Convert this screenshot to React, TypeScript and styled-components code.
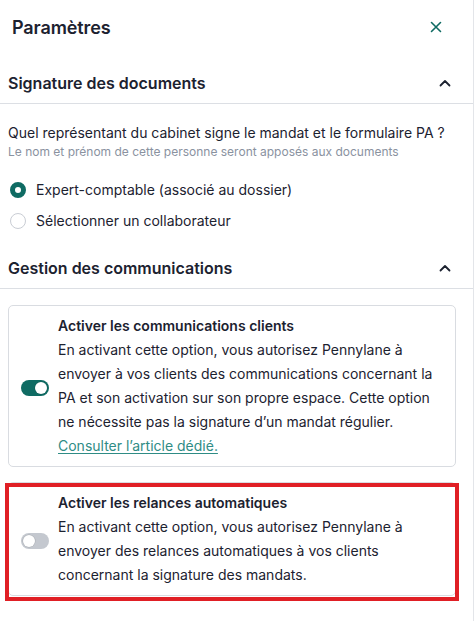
import React, { useState } from "react";
import styled, { createGlobalStyle, css } from "styled-components";

const GlobalStyle = createGlobalStyle`
  * { box-sizing: border-box; }
  html, body { margin: 0; padding: 0; background: #ffffff; }
  body {
    font-family: Inter, "Noto Sans", "Liberation Sans", sans-serif;
    color: #1c2230;
    -webkit-font-smoothing: antialiased;
  }
`;

const TEAL = "#0f6b63";

const Panel = styled.div`
  width: 474px;
  min-height: 621px;
  border-right: 1px solid #e3e5e9;
  display: flex;
  flex-direction: column;
`;

const Header = styled.header`
  height: 54px;
  display: flex;
  align-items: center;
  justify-content: space-between;
  padding: 0 21px 0 12px;
`;

const Title = styled.h1`
  margin: 0;
  font-size: 18px;
  font-weight: 600;
  letter-spacing: -0.1px;
  color: #1c2230;
`;

const IconButton = styled.button`
  width: 32px;
  height: 32px;
  border: none;
  background: transparent;
  padding: 0;
  display: flex;
  align-items: center;
  justify-content: center;
  cursor: pointer;
  color: ${TEAL};
`;

const Section = styled.section<{ $first?: boolean }>`
  display: flex;
  flex-direction: column;
  margin-top: ${(p) => (p.$first ? "8px" : "11px")};
`;

const SectionHeader = styled.div`
  height: 42px;
  display: flex;
  align-items: center;
  justify-content: space-between;
  padding: 0 16px 0 8px;
  border-bottom: 1px solid #dcdfe4;
`;

const SectionTitle = styled.h2`
  margin: 0;
  font-size: 16px;
  font-weight: 600;
  color: #1c2230;
`;

const Chevron = styled.span`
  width: 24px;
  height: 24px;
  display: flex;
  align-items: center;
  justify-content: center;
  color: #1c2230;
`;

const SectionBody = styled.div<{ $cards?: boolean }>`
  display: flex;
  flex-direction: column;
  padding: ${(p) => (p.$cards ? "16px 17px 0 8px" : "18px 8px 0 8px")};
  gap: ${(p) => (p.$cards ? "15px" : "0")};
`;

const Question = styled.p`
  margin: 0;
  font-size: 14px;
  line-height: 22px;
  color: #1c2230;
`;

const Hint = styled.p`
  margin: 0;
  font-size: 12px;
  line-height: 16px;
  color: #8a929f;
`;

const RadioGroup = styled.div`
  display: flex;
  flex-direction: column;
  margin-top: 14px;
`;

const RadioRow = styled.label`
  height: 31px;
  display: flex;
  align-items: center;
  gap: 10px;
  font-size: 14px;
  color: #1c2230;
  cursor: pointer;
`;

const RadioDot = styled.span<{ $checked: boolean }>`
  width: 16px;
  height: 16px;
  border-radius: 50%;
  margin-left: 2px;
  flex: none;
  background: #fff;
  ${(p) =>
    p.$checked
      ? css`
          border: 5px solid ${TEAL};
        `
      : css`
          border: 1px solid #c9cdd4;
        `}
`;

const Card = styled.div<{ $highlight?: boolean }>`
  position: relative;
  display: flex;
  align-items: center;
  gap: 9px;
  padding: 8px 8px 8px 12px;
  border: 1px solid #d9dce1;
  border-radius: 5px;
  background: #fff;
  ${(p) =>
    p.$highlight &&
    css`
      &::after {
        content: "";
        position: absolute;
        top: 0px;
        left: -4px;
        right: -4px;
        bottom: -6px;
        border: 4px solid #e01f25;
        pointer-events: none;
      }
    `}
`;

const Track = styled.span<{ $on: boolean }>`
  position: relative;
  flex: none;
  width: 28px;
  height: 16px;
  border-radius: 8px;
  margin-top: 3px;
  background: ${(p) => (p.$on ? TEAL : "#c4c8cf")};
  cursor: pointer;
`;

const Knob = styled.span<{ $on: boolean }>`
  position: absolute;
  top: 2px;
  left: ${(p) => (p.$on ? "14px" : "2px")};
  width: 12px;
  height: 12px;
  border-radius: 50%;
  background: #fff;
  box-shadow: 0 0 0 0.5px rgba(0, 0, 0, 0.15);
`;

const CardText = styled.div`
  display: flex;
  flex-direction: column;
  font-size: 14px;
  line-height: 24px;
  color: #1c2230;
`;

const CardTitle = styled.div`
  font-weight: 600;
  font-size: 14px;
`;

const Link = styled.a`
  color: #2f8c85;
  text-decoration: underline;
  text-underline-offset: 2px;
`;

const CloseIcon = () => (
  <svg width="12" height="12" viewBox="0 0 12 12" fill="none">
    <path d="M1.5 1.5 L10.5 10.5 M10.5 1.5 L1.5 10.5" stroke="currentColor" strokeWidth="1.6" strokeLinecap="round" />
  </svg>
);

const ChevronUp = () => (
  <svg width="12" height="8" viewBox="0 0 12 8" fill="none">
    <path d="M1.5 6.5 L6 2 L10.5 6.5" stroke="currentColor" strokeWidth="1.8" strokeLinecap="round" strokeLinejoin="round" />
  </svg>
);

const Toggle = ({ on }: { on: boolean }) => (
  <Track $on={on} role="switch" aria-checked={on}>
    <Knob $on={on} />
  </Track>
);

export default function App() {
  const [choice, setChoice] = useState(0);
  return (
    <>
      <GlobalStyle />
      <Panel>
        <Header>
          <Title>Paramètres</Title>
          <IconButton aria-label="Fermer">
            <CloseIcon />
          </IconButton>
        </Header>

        <Section $first>
          <SectionHeader>
            <SectionTitle>Signature des documents</SectionTitle>
            <Chevron>
              <ChevronUp />
            </Chevron>
          </SectionHeader>
          <SectionBody>
            <Question>Quel représentant du cabinet signe le mandat et le formulaire PA ?</Question>
            <Hint>Le nom et prénom de cette personne seront apposés aux documents</Hint>
            <RadioGroup>
              {["Expert-comptable (associé au dossier)", "Sélectionner un collaborateur"].map((label, i) => (
                <RadioRow key={label} onClick={() => setChoice(i)}>
                  <RadioDot $checked={choice === i} />
                  {label}
                </RadioRow>
              ))}
            </RadioGroup>
          </SectionBody>
        </Section>

        <Section>
          <SectionHeader>
            <SectionTitle>Gestion des communications</SectionTitle>
            <Chevron>
              <ChevronUp />
            </Chevron>
          </SectionHeader>
          <SectionBody $cards>
            <Card>
              <Toggle on />
              <CardText>
                <CardTitle>Activer les communications clients</CardTitle>
                <span>
                  En activant cette option, vous autorisez Pennylane à envoyer à vos clients des communications
                  concernant la PA et son activation sur son propre espace. Cette option ne nécessite pas la
                  signature d’un mandat régulier.
                </span>
                <span>
                  <Link href="#">Consulter l’article dédié.</Link>
                </span>
              </CardText>
            </Card>
            <Card $highlight>
              <Toggle on={false} />
              <CardText>
                <CardTitle>Activer les relances automatiques</CardTitle>
                <span>
                  En activant cette option, vous autorisez Pennylane à envoyer des relances automatiques à vos
                  clients concernant la signature des mandats.
                </span>
              </CardText>
            </Card>
          </SectionBody>
        </Section>
      </Panel>
    </>
  );
}
